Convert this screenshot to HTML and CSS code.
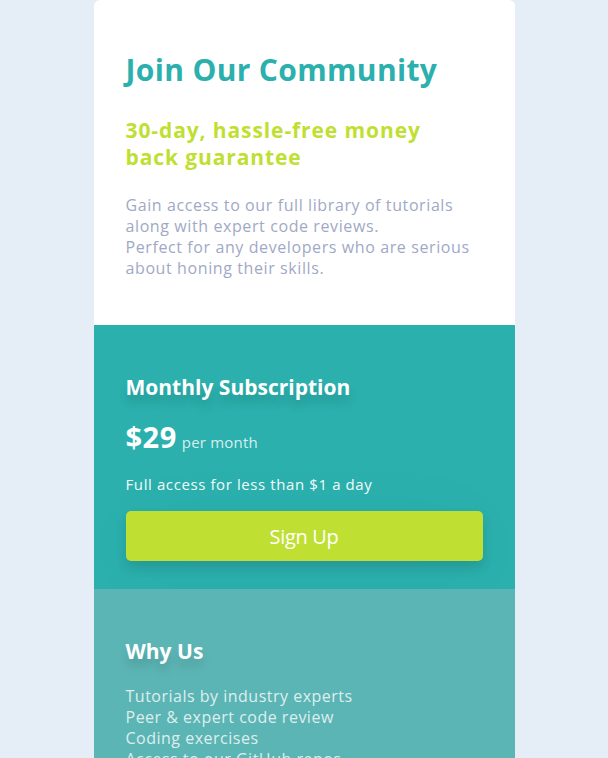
FILE: index.html
```html
<!DOCTYPE html>
<html lang="en">
<head>
<meta charset="utf-8">
<title>Single price grid</title>
<link rel="stylesheet" href="styles.css">
</head>
<body>
<main class="card">
  <section class="intro">
    <h1 class="title">Join Our Community</h1>
    <h2 class="subtitle">30-day, hassle-free money back guarantee</h2>
    <p class="desc">Gain access to our full library of tutorials along with expert code reviews.<br>Perfect for any developers who are serious about honing their skills.</p>
  </section>
  <section class="subscription">
    <h2 class="heading">Monthly Subscription</h2>
    <p class="price"><span class="amount">$29</span><span class="period">per month</span></p>
    <p class="note">Full access for less than $1 a day</p>
    <button class="signup" type="button">Sign Up</button>
  </section>
  <section class="why">
    <h2 class="heading">Why Us</h2>
    <ul class="reasons">
      <li>Tutorials by industry experts</li>
      <li>Peer &amp; expert code review</li>
      <li>Coding exercises</li>
      <li>Access to our GitHub repos</li>
      <li>Community forum</li>
      <li>Flashcard decks</li>
      <li>New videos every week</li>
    </ul>
  </section>
</main>
</body>
</html>
```
FILE: styles.css
```css
* { box-sizing: border-box; }

body {
  margin: 0;
  background: #e5edf6;
  font-family: "Open Sans", "Noto Sans", sans-serif;
}

.card {
  width: 421px;
  margin: 0 auto 40px;
  border-radius: 6px;
  overflow: hidden;
}

.intro {
  background: #ffffff;
  padding: 50px 32px 46px;
}

.title {
  margin: 0;
  font-size: 30px;
  line-height: 40px;
  font-weight: 700;
  letter-spacing: 0.35px;
  color: #2bb0ad;
}

.subtitle {
  max-width: 330px;
  margin: 27px 0 0;
  font-size: 21px;
  line-height: 27px;
  font-weight: 700;
  letter-spacing: 0.9px;
  color: #bfdf32;
}

.desc {
  margin: 24px 0 0;
  font-size: 16px;
  line-height: 21px;
  letter-spacing: 0.6px;
  color: #9fa9c6;
}

.subscription {
  background: #2bb0ad;
  padding: 49px 32px 28px;
  color: #ffffff;
}

.heading {
  margin: 0;
  font-size: 21px;
  line-height: 27px;
  font-weight: 700;
  color: #ffffff;
  text-shadow: 0 8px 10px rgba(0, 0, 0, 0.15);
}

.price {
  margin: 18px 0 0;
  font-size: 29px;
  line-height: 36px;
}

.amount {
  font-weight: 700;
  letter-spacing: 0.5px;
}

.period {
  margin-left: 5px;
  font-size: 15px;
  line-height: 1;
  letter-spacing: 0.2px;
  color: rgba(255, 255, 255, 0.82);
}

.note {
  margin: 19px 0 0;
  font-size: 15px;
  line-height: 20px;
  letter-spacing: 0.6px;
  color: #f2fbfa;
}

.signup {
  display: block;
  width: 100%;
  height: 50px;
  margin-top: 17px;
  border: 0;
  border-radius: 5px;
  background: #bfe032;
  color: #ffffff;
  font-family: "Open Sans", "Noto Sans", sans-serif;
  font-size: 20px;
  letter-spacing: -0.3px;
  box-shadow: 0 7px 12px rgba(0, 0, 0, 0.12), 0 10px 90px rgba(0, 0, 0, 0.03);
  cursor: pointer;
}

.why {
  background: #5cb5b5;
  padding: 49px 32px 40px;
  color: #ffffff;
}

.reasons {
  list-style: none;
  margin: 21px 0 0;
  padding: 0;
  font-size: 16px;
  line-height: 21px;
  letter-spacing: 0.5px;
  color: rgba(255, 255, 255, 0.8);
}
```
